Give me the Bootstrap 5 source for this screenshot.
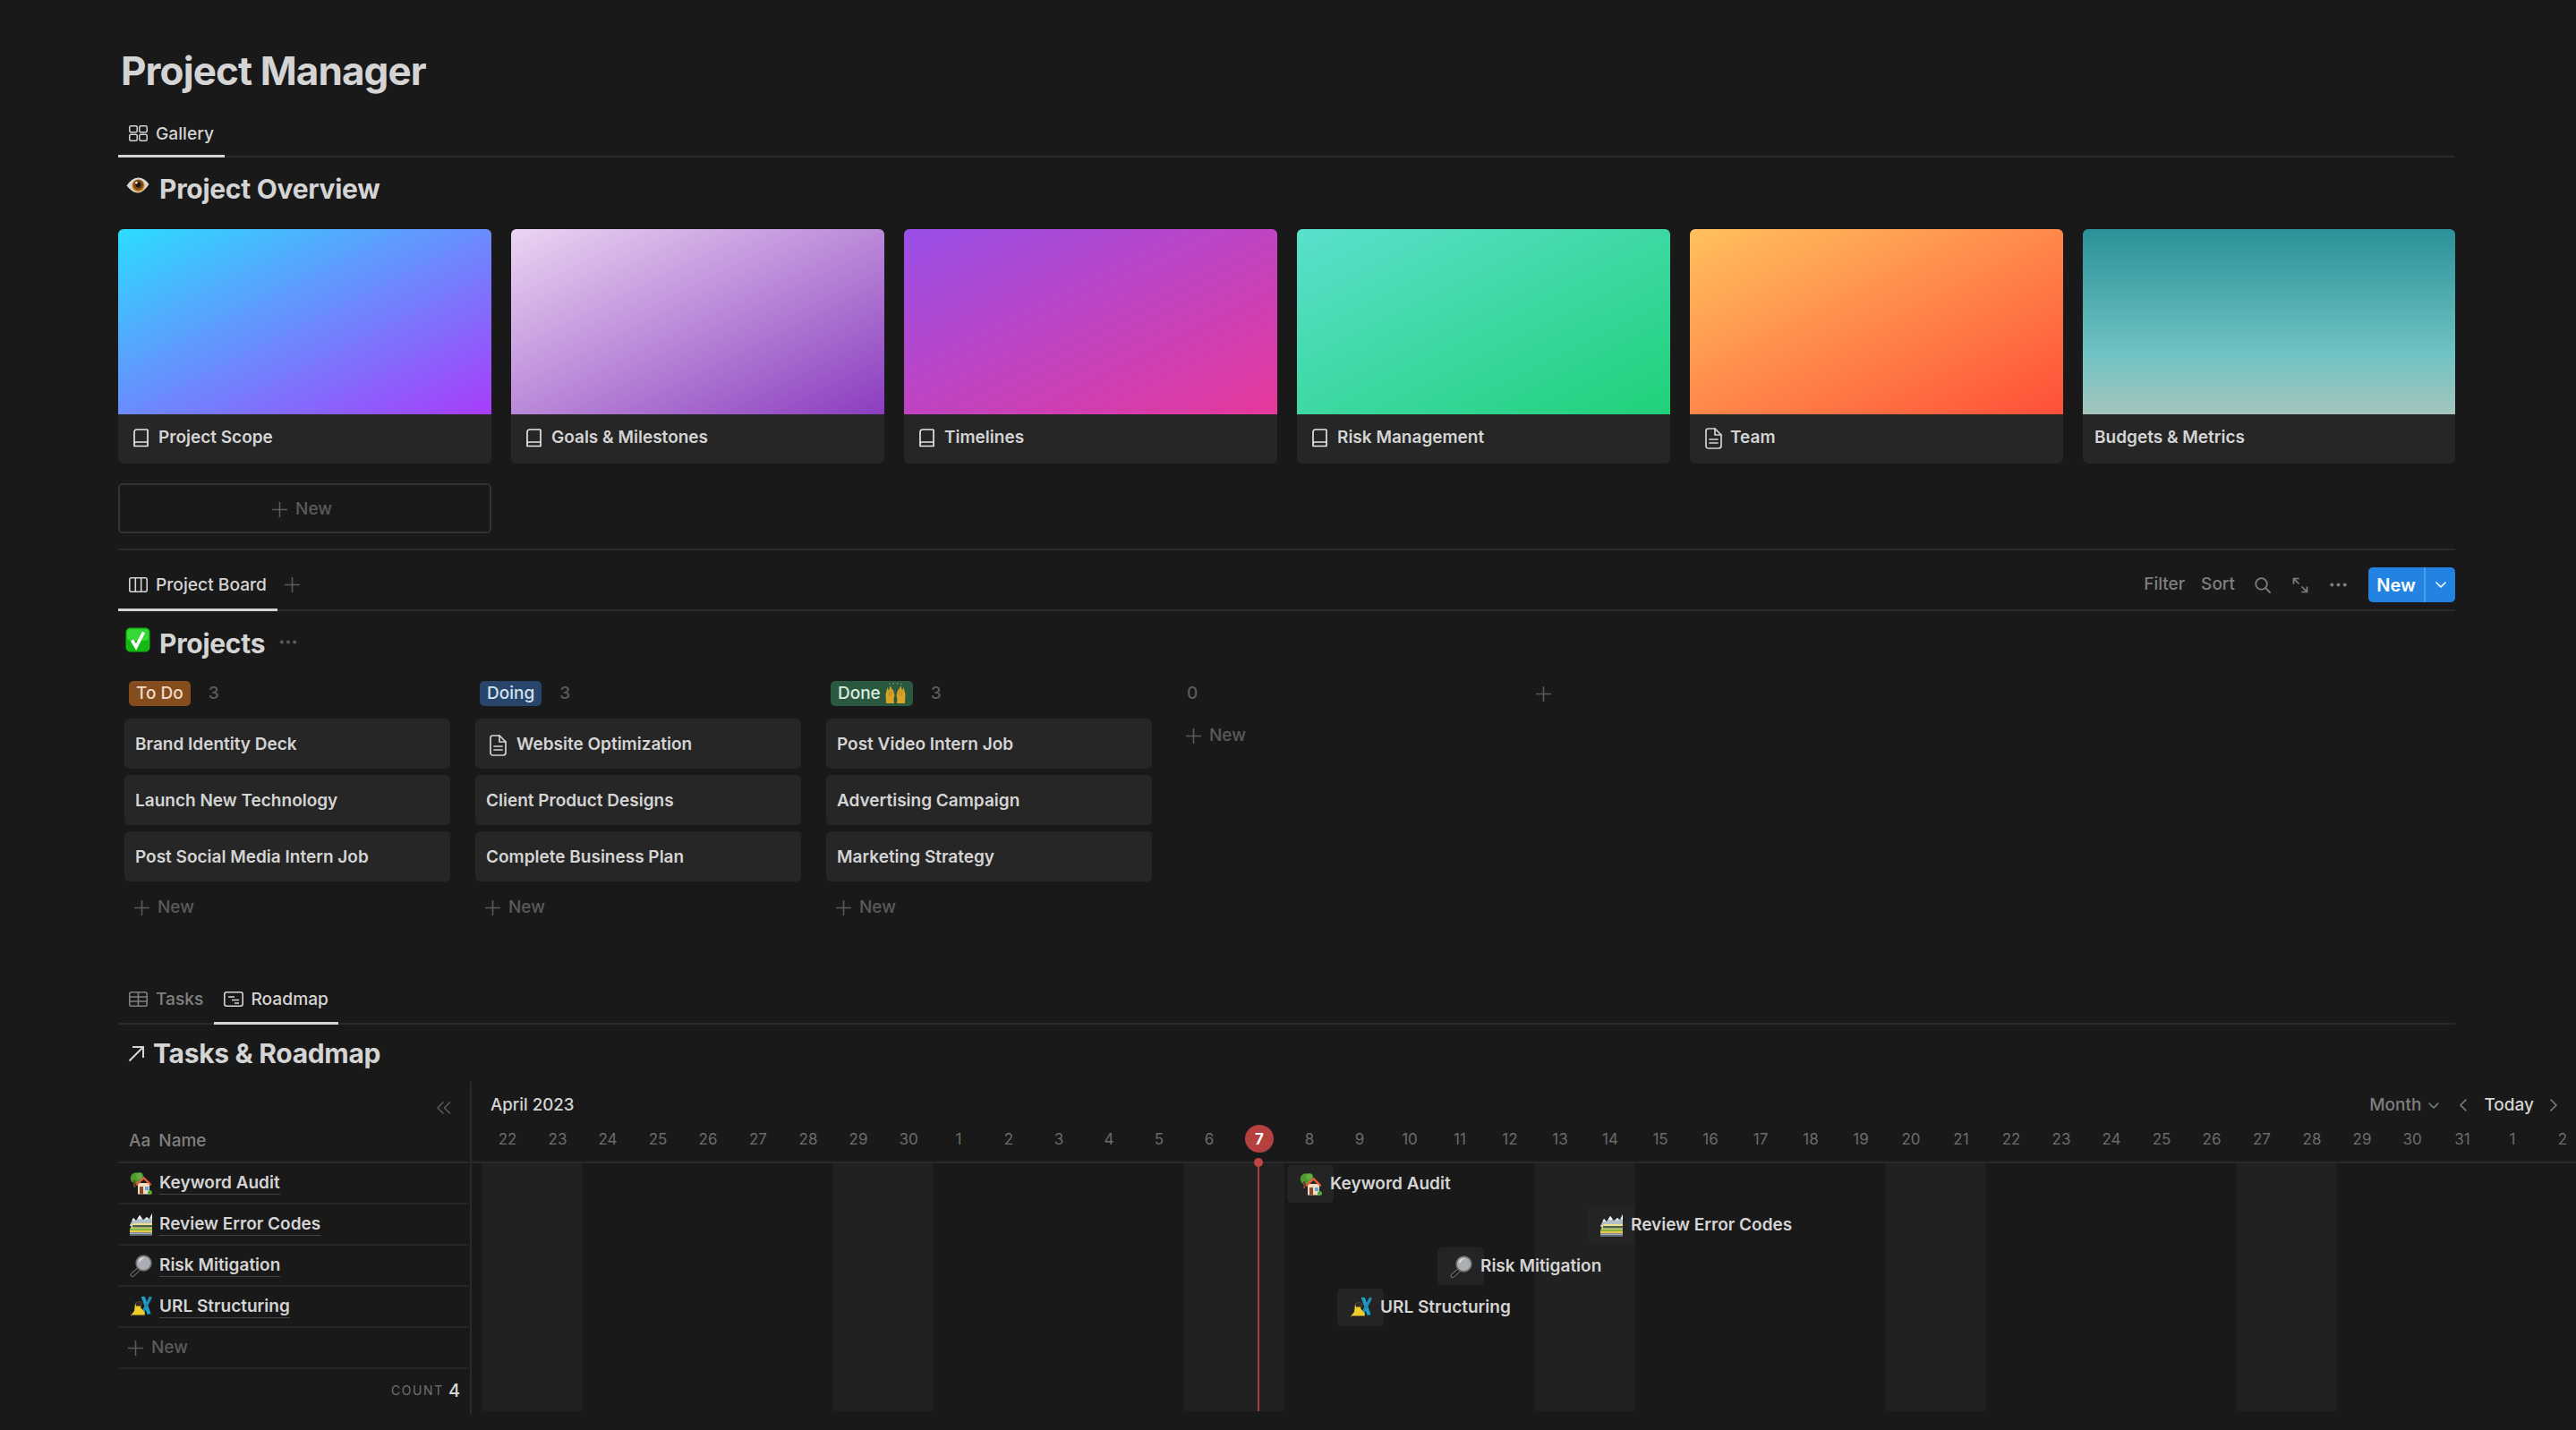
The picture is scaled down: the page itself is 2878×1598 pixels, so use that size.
<!doctype html>
<html lang="en">
<head>
<meta charset="utf-8">
<title>Project Manager</title>
<link href="https://cdn.jsdelivr.net/npm/bootstrap@5.3.0/dist/css/bootstrap.min.css" rel="stylesheet">
<style>
html,body{background:#191919;margin:0;height:100%;overflow:hidden}
body{font-family:Inter,"Liberation Sans",sans-serif;color:#d4d4d4;font-size:19px;font-weight:500}
.pm-defs{position:absolute;width:0;height:0}
.pm-page{padding:0 135px 0 132px;height:1598px;position:relative}
.pm-h1{font-size:44px;font-weight:700;line-height:58px;margin:0;padding:50px 0 16px 3px;color:#d4d4d4;letter-spacing:-.9px}
.pm-tabbar{display:flex;align-items:stretch;border-bottom:2px solid #2a2a2a}
.pm-tab{display:flex;align-items:center;gap:9px;padding:0 12px;font-size:19.2px;color:#808080;margin-bottom:-2px;border-bottom:3px solid transparent;white-space:nowrap}
.pm-tab.is-on{color:#d4d4d4;border-bottom-color:#d4d4d4}
.pm-tabbar-1{height:52px}
.pm-tabbar-1 .pm-tab{padding-top:1px}
.pm-tabbar-2{height:68px}
.pm-tabbar-2 .pm-tab{padding-top:12px}
.pm-addview{align-self:center;margin:10px 0 0 8px;color:#5a5a5a}
.pm-tabbar-3{height:54px}
.pm-tabbar-3 .pm-tab{gap:8px;padding-left:11px;padding-right:11px}
.pm-tabbar-3 .pm-tab:first-child{padding-left:12px;gap:9px;padding-right:12px}
.pm-head{display:flex;align-items:center;font-weight:700;font-size:30px;color:#d4d4d4;letter-spacing:-.3px;white-space:nowrap}
.pm-head-1{height:80px;padding-left:9px;padding-bottom:10px}
.pm-head-1 span{margin-left:3px}
.pm-head-2{height:78px;padding-left:8px;padding-bottom:6px}
.pm-head-2>span{margin-left:2px}
.pm-head-3{height:64px;padding-left:11px;padding-top:1px}
.pm-head-3 span{margin-left:1px}
.pm-gal{display:grid;grid-template-columns:repeat(5,417px) 416px;gap:22px}
.pm-gcard{background:#262626;border-radius:6px;overflow:hidden;height:262px}
.pm-gimg{height:207px}
.pm-g1{background:linear-gradient(to bottom right,#2cdcff,#a83cfb)}
.pm-g2{background:linear-gradient(to bottom right,#ead5f2,#8b3dbf)}
.pm-g3{background:linear-gradient(to bottom right,#994fe8,#e6389b)}
.pm-g4{background:linear-gradient(to bottom right,#5ae0cd,#20d179)}
.pm-g5{background:linear-gradient(to bottom right,#ffc15d,#ff4f38)}
.pm-g6{background:linear-gradient(to bottom,#2b9198 0%,#70c3c3 68%,#a4c5bc 100%)}
.pm-gtitle{height:55px;display:flex;align-items:center;gap:11px;padding:0 0 2px 17px;font-size:19px;font-weight:600;color:#d4d4d4}
.pm-gtitle-plain{padding-left:13px}
.pm-gteam{margin-left:-2px}
.pm-gnew{height:56px;margin-top:22px;width:417px;border:2px solid #333;border-radius:5px;display:flex;align-items:center;justify-content:center;gap:9px;color:#5a5a5a;font-size:19px;padding:3px 6px 0 0}
.pm-rule{height:2px;background:#2a2a2a;margin-top:17px}
.pm-plus{color:#5a5a5a;flex:none}
.pm-tools{margin-left:auto;align-self:flex-start;display:flex;align-items:center;gap:20px;color:#7f7f7f;font-size:19px;padding-top:19px}
.pm-tool-f{margin-right:-2px}
.pm-tool-a{margin-left:2px}
.pm-tool-b{margin-left:4px}
.pm-newbtn{display:flex;align-items:stretch;height:39px;background:#2383e2;color:#fff;border-radius:5px;font-weight:600;margin-left:4px;overflow:hidden;font-size:20px}
.pm-newbtn-l{width:64px;display:flex;align-items:center;justify-content:center;border-right:2px solid #4a9ae8}
.pm-newbtn-r{width:33px;display:flex;align-items:center;justify-content:center}
.pm-board{display:flex;gap:28px;padding-left:7px;height:330px}
.pm-col{width:364px;flex:none}
.pm-col-wide{width:418px}
.pm-colhead{display:flex;align-items:center;height:28px;padding-left:5px;margin-bottom:14px;font-size:19px;color:#5c5c5c}
.pm-col-wide .pm-colhead{padding-left:11px}
.pm-pill{display:flex;align-items:center;gap:5px;height:28px;padding:0 8px;border-radius:5px;font-size:19px;margin-right:20px;white-space:nowrap}
.pm-p1{background:#854c1d;color:#f0dcc8}
.pm-p2{background:#28456c;color:#d3e3f0}
.pm-p3{background:#2b593f;color:#d8ece0}
.pm-kcard{height:56px;background:#262626;border-radius:5px;display:flex;align-items:center;gap:11px;padding:3px 12px 0;margin-bottom:7px;font-size:19px;font-weight:600;color:#d4d4d4;white-space:nowrap}
.pm-knew{display:flex;align-items:center;gap:9px;height:44px;margin-top:-1px;padding-left:11px;color:#5a5a5a;font-size:19px;padding-top:2px}
.pm-col-wide .pm-knew{padding-left:10px;height:36px;margin-top:10px}
.pm-tl{display:flex;height:372px;margin-right:-135px}
.pm-left{width:392px;flex:none;display:flex;flex-direction:column}
.pm-lhead{height:91px;border-bottom:2px solid #2a2a2a;position:relative;color:#7f7f7f;font-size:19px;display:flex;align-items:flex-end;padding:0 0 9px 12px;gap:9px}
.pm-coll{position:absolute;right:20px;top:22px;color:#5a5a5a}
.pm-lrow{height:46px;border-bottom:2px solid #262626;display:flex;align-items:center;gap:8px;padding-left:13px;font-size:19px;font-weight:600;color:#d4d4d4;white-space:nowrap}
.pm-lrow>span{border-bottom:1px solid #444;line-height:25px}
.pm-lnew{height:46px;border-bottom:2px solid #262626;display:flex;align-items:center;gap:9px;padding-left:11px;color:#5a5a5a;font-size:19px}
.pm-lcount{height:47px;display:flex;align-items:center;justify-content:flex-end;gap:5px;padding:0 10px 0 0;color:#707070;font-size:14px;letter-spacing:1.6px;font-weight:400}
.pm-lcount b{font-size:20px;color:#d4d4d4;letter-spacing:0;font-weight:500}
.pm-right{flex:1;min-width:0;border-left:2px solid #2a2a2a;margin-left:1px;overflow:hidden;position:relative}
.pm-rtop{height:52px;display:flex;align-items:center;padding-left:21px;font-size:18.7px;color:#d4d4d4}
.pm-rctl{margin-left:auto;display:flex;align-items:center;padding-right:21px;font-size:19px;color:#7f7f7f}
.pm-rctl i{font-style:normal;color:#d4d4d4;margin:0 18px 0 19px}
.pm-rctl-prev{margin-left:23px}
.pm-dates{height:39px;border-bottom:2px solid #2a2a2a;display:flex;padding-left:12px;align-items:flex-start}
.pm-dates span{flex:none;width:56px;text-align:center;font-size:17px;color:#6b6b6b;font-weight:400;line-height:24px}
.pm-today{position:relative;color:#fff!important;font-weight:700!important}
.pm-today::before{content:"";position:absolute;left:12px;top:-4px;width:32px;height:31px;border-radius:50%;background:#b44040;z-index:0}
.pm-today em{position:relative;font-style:normal;z-index:1}
.pm-canvas{position:relative;height:277px}
.pm-band{position:absolute;top:0;bottom:0;width:112px;background:#212121}
.pm-now{position:absolute;left:878px;top:-2px;bottom:0;width:2px;background:#a83c3c}
.pm-nowdot{position:absolute;left:874px;top:-6px;width:10px;height:10px;border-radius:50%;background:#c04444}
.pm-bar{position:absolute;display:flex;align-items:center;height:42px;font-size:19px;font-weight:600;color:#d4d4d4;white-space:nowrap}
.pm-barbox{width:52px;height:42px;background:#242424;border-radius:5px;display:flex;align-items:center;justify-content:center;margin-right:-4px}
</style>
</head>
<body>
<svg class="pm-defs" aria-hidden="true">
<defs>
<symbol id="i-gal" viewBox="0 0 21 18"><g fill="none" stroke="currentColor" stroke-width="1.5"><rect x=".8" y=".8" width="8.4" height="7" rx="1.5"/><rect x="11.8" y=".8" width="8.4" height="7" rx="1.5"/><rect x=".8" y="10.2" width="8.4" height="7" rx="1.5"/><rect x="11.8" y="10.2" width="8.4" height="7" rx="1.5"/></g></symbol>
<symbol id="i-book" viewBox="0 0 17 21"><g fill="none" stroke="#e6e6e6" stroke-width="1.7" stroke-linejoin="round"><path d="M16 1H4Q1 1 1 4V19.5H16V15H3.5Q1 15 1 17.2"/><path d="M16 1V15"/></g></symbol>
<symbol id="i-doc" viewBox="0 0 19 24"><g fill="none" stroke="currentColor" stroke-width="1.7" stroke-linejoin="round" stroke-linecap="round"><path d="M3.5 1H11L18 8V20Q18 23 15 23H4Q1 23 1 20V3.5Q1 1 3.5 1Z"/><path d="M11 1V8H18"/><path d="M5 13H14M5 17H14"/></g></symbol>
<symbol id="i-board" viewBox="0 0 21 17"><g fill="none" stroke="currentColor" stroke-width="1.6"><rect x=".8" y=".8" width="19.4" height="15.4" rx="2"/><path d="M7.3 1V16M13.7 1V16"/></g></symbol>
<symbol id="i-plus" viewBox="0 0 17 17"><path d="M8.5 0V17M0 8.5H17" stroke="currentColor" stroke-width="1.6" fill="none"/></symbol>
<symbol id="i-table" viewBox="0 0 21 17"><g fill="none" stroke="currentColor" stroke-width="1.6"><rect x=".8" y=".8" width="19.4" height="15.4" rx="2"/><path d="M1 6H20M1 11H20M10.5 1V16"/></g></symbol>
<symbol id="i-road" viewBox="0 0 22 17"><g fill="none" stroke="currentColor" stroke-width="1.6"><rect x=".8" y=".8" width="20.4" height="15.4" rx="2.4"/><path d="M5 6H12M9 9.5H17M12 13H17"/></g></symbol>
<symbol id="i-search" viewBox="0 0 18 18"><g fill="none" stroke="currentColor" stroke-width="1.8" stroke-linecap="round"><circle cx="7.5" cy="7.5" r="6.3"/><path d="M12 12L17 17"/></g></symbol>
<symbol id="i-expand" viewBox="0 0 18 18"><g fill="none" stroke="currentColor" stroke-width="1.7" stroke-linecap="round" stroke-linejoin="round"><path d="M1.5 7V1.5H7M1.5 1.5L7 7"/><path d="M16.5 11V16.5H11M16.5 16.5L11 11"/></g></symbol>
<symbol id="i-dots" viewBox="0 0 19 5"><g fill="currentColor"><circle cx="2.3" cy="2.5" r="2"/><circle cx="9.5" cy="2.5" r="2"/><circle cx="16.7" cy="2.5" r="2"/></g></symbol>
<symbol id="i-chev" viewBox="0 0 12 7"><path d="M1 1L6 6L11 1" fill="none" stroke="currentColor" stroke-width="1.6" stroke-linecap="round" stroke-linejoin="round"/></symbol>
<symbol id="i-left" viewBox="0 0 8 14"><path d="M7 1L1 7L7 13" fill="none" stroke="currentColor" stroke-width="1.6" stroke-linecap="round" stroke-linejoin="round"/></symbol>
<symbol id="i-right" viewBox="0 0 8 14"><path d="M1 1L7 7L1 13" fill="none" stroke="currentColor" stroke-width="1.6" stroke-linecap="round" stroke-linejoin="round"/></symbol>
<symbol id="i-coll" viewBox="0 0 17 14"><path d="M8 1L2 7L8 13M15.5 1L9.5 7L15.5 13" fill="none" stroke="currentColor" stroke-width="1.6" stroke-linecap="round" stroke-linejoin="round"/></symbol>
<symbol id="i-arrow" viewBox="0 0 19 19"><path d="M1.5 17.5L17 2M5 2H17V14" fill="none" stroke="currentColor" stroke-width="2"/></symbol>
<symbol id="e-eye" viewBox="0 0 26 18"><path d="M0.5 9.5Q6 1 13 0.5T25.5 8Q19 17.5 13 17.5T0.5 9.5Z" fill="#dcd6d0"/><circle cx="13.5" cy="9.4" r="7" fill="#c98a14"/><circle cx="13.5" cy="8.6" r="5.8" fill="#7a4a22"/><circle cx="13.5" cy="8.6" r="3" fill="#241207"/><circle cx="11.4" cy="6.2" r="1.2" fill="#fff"/></symbol>
<symbol id="e-check" viewBox="0 0 28 28"><rect x=".5" y=".5" width="27" height="27" rx="5" fill="#13b913"/><rect x="2" y="2" width="24" height="13" rx="4" fill="#35d835"/><path d="M7.5 14.5L12 22L20.5 5.5" fill="none" stroke="#fff" stroke-width="3.6"/></symbol>
<symbol id="e-house" viewBox="0 0 25 25"><circle cx="7" cy="6.5" r="6.2" fill="#4f9a30"/><circle cx="11" cy="4" r="3.8" fill="#5fae3c"/><rect x="4" y="9" width="2.4" height="8" fill="#6d4526"/><rect x="9" y="12" width="13" height="12.5" fill="#f2dcc0"/><path d="M6.5 13.5L15.5 4.5L24.5 13.5L23 15L15.5 8L8 15Z" fill="#e85c3e"/><rect x="11" y="16" width="4" height="8.5" fill="#8a4a2c"/><rect x="17" y="16" width="4" height="4" fill="#5fa8df"/><circle cx="22.5" cy="22.5" r="2.5" fill="#4fa838"/></symbol>
<symbol id="e-rail" viewBox="0 0 25 25"><path d="M0 13L4 5L7 8L11 2L15 7L19 4L22 6L25 0V14H0Z" fill="#b4c0c7"/><path d="M4 5L2.5 8H6.5ZM11 2L8.8 5.5L11.5 6.5L13.5 5ZM19 4L17 6.5L20.5 6.5ZM25 0L22.5 5L25 6Z" fill="#f4f7f8"/><path d="M0 21L2 12.5Q3 11 6 11H25V21Z" fill="#efe08a"/><rect x="3" y="13" width="22" height="2.5" fill="#49604f"/><rect x="0" y="16.5" width="25" height="2.5" fill="#86b63e"/><rect x="0" y="19" width="25" height="2" fill="#e8c850"/><path d="M0 21.5H25V25H0Z" fill="#5f6a74"/><path d="M0 21.5H25V22.7H0Z" fill="#c4ced4"/></symbol>
<symbol id="e-mag" viewBox="0 0 25 25"><path d="M11 13L1.5 21.3Q0 23.5 2 24.5Q3.6 25 4.8 23.6L13.5 15.5Z" fill="#1b1b1b" stroke="#8c8c8c" stroke-width="1"/><circle cx="15.5" cy="9.5" r="9.2" fill="#6f7072"/><circle cx="15.5" cy="9.5" r="7.6" fill="#abafb3"/><path d="M10 6Q12.5 2.8 17 3Q13 4.5 11 9Z" fill="#dcdfe1"/></symbol>
<symbol id="e-ski" viewBox="0 0 25 25"><path d="M15 0L19 0.8L21 21L17 21Z" fill="#1e9fc8" transform="rotate(-14 18 10)"/><path d="M22 0.5L25 2L14 23L11 22Z" fill="#1d8fb8"/><path d="M6 8L11 6L14 8L12 13L17 19L16 23H3L1 22L5 17Z" fill="#eccd2a"/><path d="M6 8L11 6L14 8L12.5 11.5H7Z" fill="#2b2b2b"/><rect x="2" y="21.5" width="14" height="2" fill="#1d1d1d"/></symbol>
<symbol id="e-hands" viewBox="0 0 23 24"><g fill="#d9a326"><path d="M1 23L0.5 13L2.5 5L4 9L5.5 3.5L7.5 7L9 8.5L10.5 14L9.5 18L10 23Z"/><path d="M22 23L22.5 13L20.5 5L19 9L17.5 3.5L15.5 7L14 8.5L12.5 14L13.5 18L13 23Z"/></g><g fill="none" stroke="#9c7a1c" stroke-width=".7"><path d="M4 10L5 15M7 9L7.5 14M19 10L18 15M16 9L15.5 14"/></g><g fill="#8a8a70"><circle cx="5" cy="1.2" r=".8"/><circle cx="9" cy="0.9" r=".8"/><circle cx="13.5" cy="0.9" r=".8"/><circle cx="18" cy="1.2" r=".8"/></g></symbol>
</defs>
</svg>

<div class="pm-page">
  <h1 class="pm-h1">Project Manager</h1>

  <div class="pm-tabbar pm-tabbar-1">
    <div class="pm-tab is-on"><svg width="21" height="18"><use href="#i-gal"/></svg>Gallery</div>
  </div>

  <div class="pm-head pm-head-1"><svg width="26" height="18" class="me-2 mb-2 flex-none"><use href="#e-eye"/></svg><span>Project Overview</span></div>

  <div class="pm-gal">
    <div class="pm-gcard"><div class="pm-gimg pm-g1"></div><div class="pm-gtitle"><svg width="17" height="21"><use href="#i-book"/></svg>Project Scope</div></div>
    <div class="pm-gcard"><div class="pm-gimg pm-g2"></div><div class="pm-gtitle"><svg width="17" height="21"><use href="#i-book"/></svg>Goals &amp; Milestones</div></div>
    <div class="pm-gcard"><div class="pm-gimg pm-g3"></div><div class="pm-gtitle"><svg width="17" height="21"><use href="#i-book"/></svg>Timelines</div></div>
    <div class="pm-gcard"><div class="pm-gimg pm-g4"></div><div class="pm-gtitle"><svg width="17" height="21"><use href="#i-book"/></svg>Risk Management</div></div>
    <div class="pm-gcard"><div class="pm-gimg pm-g5"></div><div class="pm-gtitle"><svg width="19" height="24"><use href="#i-doc"/></svg><span class="pm-gteam">Team</span></div></div>
    <div class="pm-gcard"><div class="pm-gimg pm-g6"></div><div class="pm-gtitle pm-gtitle-plain">Budgets &amp; Metrics</div></div>
  </div>
  <div class="pm-gnew"><svg width="17" height="17"><use href="#i-plus"/></svg>New</div>
  <div class="pm-rule"></div>

  <div class="pm-tabbar pm-tabbar-2">
    <div class="pm-tab is-on"><svg width="21" height="17"><use href="#i-board"/></svg>Project Board</div>
    <svg class="pm-addview" width="17" height="17"><use href="#i-plus"/></svg>
    <div class="pm-tools">
      <span class="pm-tool-f">Filter</span><span>Sort</span>
      <svg class="pm-tool-a" width="18" height="18"><use href="#i-search"/></svg>
      <svg class="pm-tool-b" width="18" height="18"><use href="#i-expand"/></svg>
      <svg class="pm-tool-b" width="19" height="5"><use href="#i-dots"/></svg>
      <div class="pm-newbtn"><div class="pm-newbtn-l">New</div><div class="pm-newbtn-r"><svg width="12" height="7"><use href="#i-chev"/></svg></div></div>
    </div>
  </div>

  <div class="pm-head pm-head-2"><svg width="28" height="28" class="me-2 mb-2 flex-none"><use href="#e-check"/></svg><span>Projects</span><svg class="ms-3 mb-1 pm-plus" width="20" height="5"><use href="#i-dots"/></svg></div>

  <div class="pm-board">
    <div class="pm-col">
      <div class="pm-colhead"><span class="pm-pill pm-p1">To Do</span>3</div>
      <div class="pm-kcard">Brand Identity Deck</div>
      <div class="pm-kcard">Launch New Technology</div>
      <div class="pm-kcard">Post Social Media Intern Job</div>
      <div class="pm-knew"><svg width="17" height="17"><use href="#i-plus"/></svg>New</div>
    </div>
    <div class="pm-col">
      <div class="pm-colhead"><span class="pm-pill pm-p2">Doing</span>3</div>
      <div class="pm-kcard"><svg width="19" height="24" class="flex-none ms-1"><use href="#i-doc"/></svg>Website Optimization</div>
      <div class="pm-kcard">Client Product Designs</div>
      <div class="pm-kcard">Complete Business Plan</div>
      <div class="pm-knew"><svg width="17" height="17"><use href="#i-plus"/></svg>New</div>
    </div>
    <div class="pm-col">
      <div class="pm-colhead"><span class="pm-pill pm-p3">Done<svg width="23" height="24"><use href="#e-hands"/></svg></span>3</div>
      <div class="pm-kcard">Post Video Intern Job</div>
      <div class="pm-kcard">Advertising Campaign</div>
      <div class="pm-kcard">Marketing Strategy</div>
      <div class="pm-knew"><svg width="17" height="17"><use href="#i-plus"/></svg>New</div>
    </div>
    <div class="pm-col pm-col-wide">
      <div class="pm-colhead">0<svg class="ms-auto pm-plus" width="17" height="17"><use href="#i-plus"/></svg></div>
      <div class="pm-knew"><svg width="17" height="17"><use href="#i-plus"/></svg>New</div>
    </div>
  </div>

  <div class="pm-tabbar pm-tabbar-3">
    <div class="pm-tab"><svg width="21" height="17"><use href="#i-table"/></svg>Tasks</div>
    <div class="pm-tab is-on"><svg width="22" height="17"><use href="#i-road"/></svg>Roadmap</div>
  </div>

  <div class="pm-head pm-head-3"><svg width="19" height="19" class="me-2 flex-none"><use href="#i-arrow"/></svg><span>Tasks &amp; Roadmap</span></div>

  <div class="pm-tl">
    <div class="pm-left">
      <div class="pm-lhead"><svg class="pm-coll" width="17" height="14"><use href="#i-coll"/></svg><span>Aa</span><span>Name</span></div>
      <div class="pm-lrow"><svg width="25" height="25"><use href="#e-house"/></svg><span>Keyword Audit</span></div>
      <div class="pm-lrow"><svg width="25" height="25"><use href="#e-rail"/></svg><span>Review Error Codes</span></div>
      <div class="pm-lrow"><svg width="25" height="25"><use href="#e-mag"/></svg><span>Risk Mitigation</span></div>
      <div class="pm-lrow"><svg width="25" height="25"><use href="#e-ski"/></svg><span>URL Structuring</span></div>
      <div class="pm-lnew"><svg width="17" height="17"><use href="#i-plus"/></svg>New</div>
      <div class="pm-lcount">COUNT <b>4</b></div>
    </div>
    <div class="pm-right">
      <div class="pm-rtop">April 2023
        <div class="pm-rctl">Month<svg class="ms-2" width="12" height="7"><use href="#i-chev"/></svg><svg class="pm-rctl-prev" width="8" height="14"><use href="#i-left"/></svg><i>Today</i><svg width="8" height="14"><use href="#i-right"/></svg></div>
      </div>
      <div class="pm-dates"><span>22</span><span>23</span><span>24</span><span>25</span><span>26</span><span>27</span><span>28</span><span>29</span><span>30</span><span>1</span><span>2</span><span>3</span><span>4</span><span>5</span><span>6</span><span class="pm-today"><em>7</em></span><span>8</span><span>9</span><span>10</span><span>11</span><span>12</span><span>13</span><span>14</span><span>15</span><span>16</span><span>17</span><span>18</span><span>19</span><span>20</span><span>21</span><span>22</span><span>23</span><span>24</span><span>25</span><span>26</span><span>27</span><span>28</span><span>29</span><span>30</span><span>31</span><span>1</span><span>2</span></div>
      <div class="pm-canvas">
        <div class="pm-band" style="left:12px"></div>
        <div class="pm-band" style="left:404px"></div>
        <div class="pm-band" style="left:796px"></div>
        <div class="pm-band" style="left:1188px"></div>
        <div class="pm-band" style="left:1580px"></div>
        <div class="pm-band" style="left:1972px"></div>
        <div class="pm-now"></div><div class="pm-nowdot"></div>
        <div class="pm-bar" style="left:911px;top:2px"><div class="pm-barbox"><svg width="25" height="25"><use href="#e-house"/></svg></div>Keyword Audit</div>
        <div class="pm-bar" style="left:1247px;top:48px"><div class="pm-barbox"><svg width="25" height="25"><use href="#e-rail"/></svg></div>Review Error Codes</div>
        <div class="pm-bar" style="left:1079px;top:94px"><div class="pm-barbox"><svg width="25" height="25"><use href="#e-mag"/></svg></div>Risk Mitigation</div>
        <div class="pm-bar" style="left:967px;top:140px"><div class="pm-barbox"><svg width="25" height="25"><use href="#e-ski"/></svg></div>URL Structuring</div>
      </div>
    </div>
  </div>
</div>
<script src="https://cdn.jsdelivr.net/npm/bootstrap@5.3.0/dist/js/bootstrap.bundle.min.js"></script>
</body>
</html>
